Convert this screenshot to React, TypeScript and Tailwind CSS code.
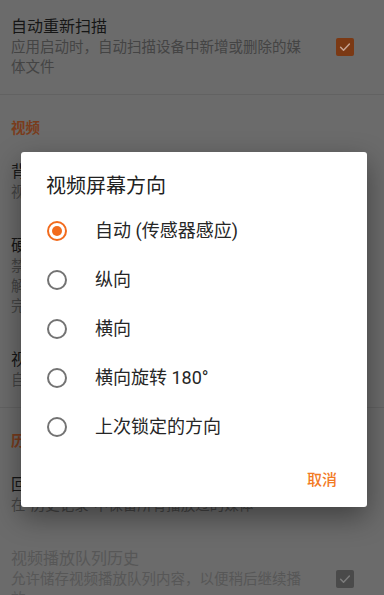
import React from "react";

const FONT = "font-['Roboto','Noto_Sans_CJK_SC',sans-serif]";

function Check({ disabled }: { disabled?: boolean }) {
  return (
    <div
      className={`w-[18px] h-[18px] rounded-[2px] flex items-center justify-center shrink-0 ${
        disabled ? "bg-[#4a4a4a]" : "bg-[#7b3914]"
      }`}
    >
      <svg width="14" height="14" viewBox="0 0 24 24" fill="none">
        <path
          d="M4.5 12.5l5 5L19.5 7"
          stroke={disabled ? "#7c7c7c" : "#c6a392"}
          strokeWidth="2.6"
          strokeLinecap="round"
          strokeLinejoin="round"
        />
      </svg>
    </div>
  );
}

function Item({
  title,
  lines,
  check,
  disabled,
}: {
  title: string;
  lines: string[];
  check?: boolean;
  disabled?: boolean;
}) {
  return (
    <div className="flex items-center px-[11px] py-4">
      <div className="w-[300px] flex flex-col">
        <div
          className={`text-[16px] leading-[22px] ${
            disabled ? "text-[#575757]" : "text-[#161616]"
          }`}
        >
          {title}
        </div>
        {lines.map((l, i) => (
          <div
            key={i}
            className={`text-[14.5px] leading-[20px] ${
              disabled ? "text-[#575757]" : "text-[#444444]"
            }`}
          >
            {l}
          </div>
        ))}
      </div>
      {check !== undefined && (
        <div className="flex-1 flex justify-end pr-[19px]">
          <Check disabled={disabled} />
        </div>
      )}
    </div>
  );
}

function Section({ label }: { label: string }) {
  return (
    <div className="px-[11px] pt-6 pb-[6px] text-[14.5px] leading-[20px] font-bold text-[#7a3c1c]">
      {label}
    </div>
  );
}

function Radio({ selected }: { selected?: boolean }) {
  return (
    <div
      className={`w-[20px] h-[20px] rounded-full border-2 flex items-center justify-center shrink-0 ${
        selected ? "border-[#f26b1d]" : "border-[#737373]"
      }`}
    >
      {selected && <div className="w-[10px] h-[10px] rounded-full bg-[#f26b1d]" />}
    </div>
  );
}

const options = ["自动 (传感器感应)", "纵向", "横向", "横向旋转 180°", "上次锁定的方向"];

export default function App() {
  return (
    <div className={`relative w-[384px] h-[595px] overflow-hidden bg-[#6b6b6b] ${FONT}`}>
      <div className="flex flex-col">
        <Item
          title="自动重新扫描"
          lines={["应用启动时，自动扫描设备中新增或删除的媒", "体文件"]}
          check
        />
        <div className="h-px bg-[#626262]" />
        <Section label="视频" />
        <Item title="背景/画中画模式" lines={["视频在后台或画中画中继续播放"]} />
        <Item
          title="硬件加速"
          lines={["禁用：使用软件解码", "解码加速：使用硬件解码", "完全加速：硬件解码与渲染"]}
        />
        <Item title="视频屏幕方向" lines={["自动 (传感器感应)"]} />
        <div className="h-px bg-[#626262]" />
        <Section label="历史" />
        <Item title="回放历史" lines={["在“历史记录”中保留所有播放过的媒体"]} />
        <Item
          title="视频播放队列历史"
          lines={["允许储存视频播放队列内容，以便稍后继续播", "放"]}
          check
          disabled
        />
      </div>

      <div className="absolute left-[21px] top-[152px] w-[346px] h-[355px] bg-white rounded-[3px] shadow-[0_10px_28px_rgba(0,0,0,0.4)] flex flex-col">
        <div className="pl-[25px] pt-6 text-[20px] leading-[20px] text-[#212121]">视频屏幕方向</div>
        <div className="flex flex-col mt-[10px]">
          {options.map((o, i) => (
            <div key={o} className="h-[49px] flex items-center pl-[26px]">
              <Radio selected={i === 0} />
              <span className="ml-[28px] text-[18px] text-[#262626]">{o}</span>
            </div>
          ))}
        </div>
        <div className="flex justify-end pr-[30px] mt-[11px]">
          <button className="h-[36px] text-[15px] font-medium text-[#f27a24]">取消</button>
        </div>
      </div>
    </div>
  );
}
